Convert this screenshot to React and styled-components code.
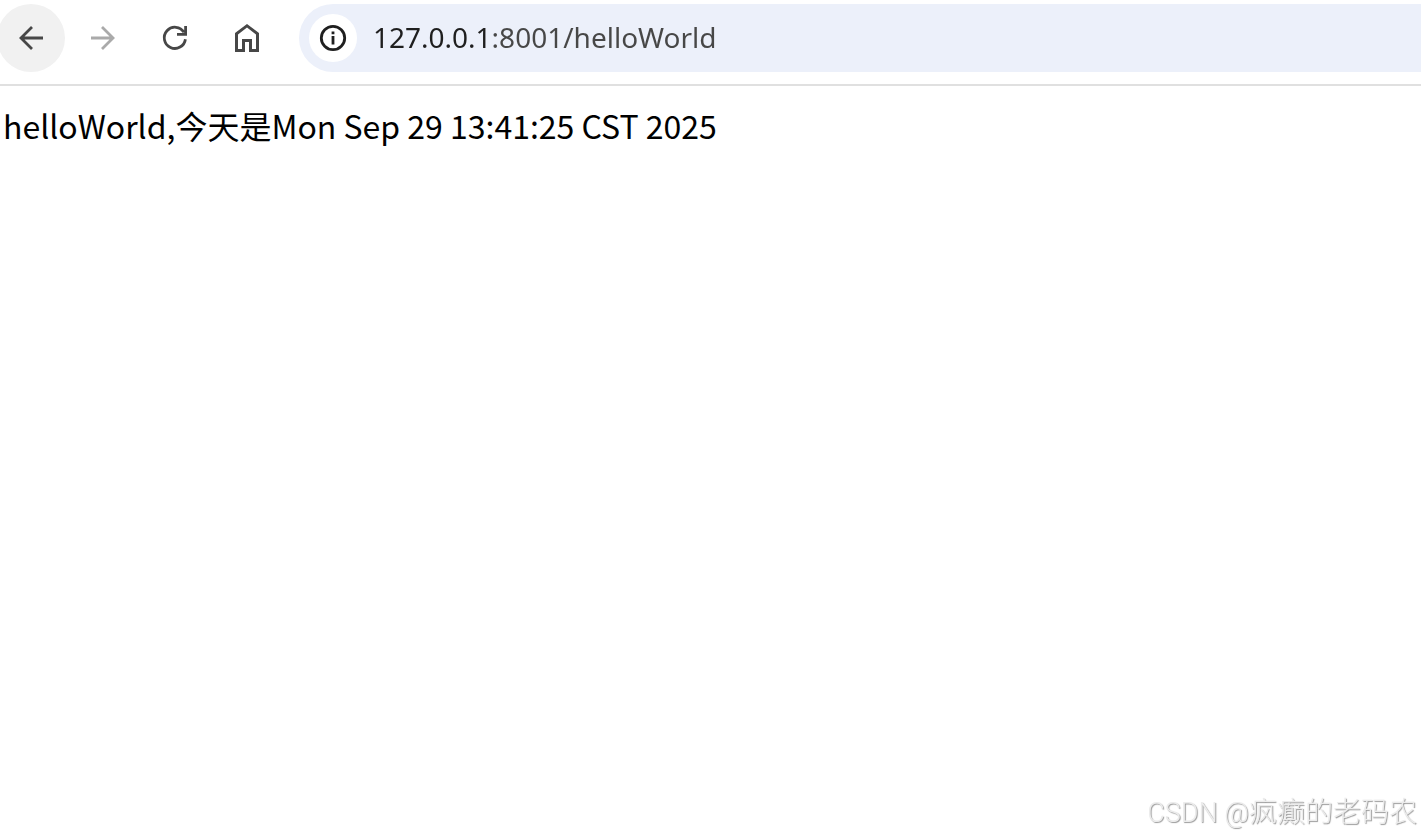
import React, { useState } from "react";
import styled, { createGlobalStyle } from "styled-components";

const App = () => {
  const [url, setUrl] = useState("127.0.0.1:8001/helloWorld");

  return (
    <>
      <GlobalStyle />
      <Toolbar>
        <NavButton type="button" aria-label="Back" $active>
          <Icon viewBox="0 0 32 32">
            <path d="M28 16H6M17 5L6 16L17 27" />
          </Icon>
        </NavButton>
        <NavButton type="button" aria-label="Forward" $muted>
          <Icon viewBox="0 0 32 32">
            <path d="M4 16H26M15 5L26 16L15 27" />
          </Icon>
        </NavButton>
        <NavButton type="button" aria-label="Reload">
          <Icon viewBox="0 0 32 32">
            <path d="M26.4 17.2A10.6 10.6 0 1 1 25 10.4M18 12.4H26.6V4" />
          </Icon>
        </NavButton>
        <NavButton type="button" aria-label="Home">
          <Icon viewBox="0 0 32 32">
            <path
              d="M16 2L28 11V30H18V20H14V30H4V11ZM16 5.6L7 12.4V27H11V17H21V27H25V12.4Z"
              fill="currentColor"
              fillRule="evenodd"
              stroke="none"
            />
          </Icon>
        </NavButton>
        <AddressBar>
          <InfoButton type="button" aria-label="Site information">
            <Icon viewBox="0 0 32 32">
              <circle cx="16" cy="16" r="11.7" />
              <path d="M16 9.4V12.2M16 14V22.6" />
            </Icon>
          </InfoButton>
          <AddressInput
            type="text"
            aria-label="Address"
            spellCheck="false"
            value={url}
            onChange={(e) => setUrl(e.target.value)}
          />
        </AddressBar>
      </Toolbar>

      <Content>helloWorld,今天是Mon Sep 29 13:41:25 CST 2025</Content>

      <Watermark>
        <Site>CSDN @</Site>疯癫的老码农
      </Watermark>
    </>
  );
};

export default App;

const GlobalStyle = createGlobalStyle`
body{
margin:0;
background:#fff;
overflow-x:hidden;
}
*{
box-sizing:border-box;
}
`
const Toolbar = styled.header`
display:flex;
align-items:center;
gap:4px;
margin-left:-3px;
padding:4px 0 12px;
border-bottom:2px solid #e0e0e0;
`
const NavButton = styled.button`
display:flex;
flex:none;
align-items:center;
justify-content:center;
width:68px;
height:68px;
padding:0;
border:0;
border-radius:50%;
background:${(props) => (props.$active ? "#f1f1f1" : "transparent")};
color:${(props) => (props.$muted ? "#aaa" : "#474747")};
`
const Icon = styled.svg`
width:32px;
height:32px;
fill:none;
stroke:currentColor;
stroke-width:2.8;
`
const AddressBar = styled.div`
display:flex;
flex:1;
align-items:center;
gap:16px;
height:68px;
margin-left:14px;
padding-left:10px;
border-radius:34px 0 0 34px;
background:#ecf0fa;
`
const InfoButton = styled.button`
display:flex;
flex:none;
align-items:center;
justify-content:center;
width:48px;
height:48px;
padding:0;
border:0;
border-radius:50%;
background:#fff;
color:#1f1f1f;
`
/* host part is darker than the port and path */
const AddressInput = styled.input`
flex:1;
min-width:0;
height:48px;
padding:0 0 2px;
border:0;
outline:0;
font:28px/46px "Noto Sans", sans-serif;
color:#474747;
background:linear-gradient(to right, #1f1f1f 118px, #474747 118px);
background-clip:text;
-webkit-text-fill-color:transparent;
`
const Content = styled.main`
padding:15px 3px;
font:32px/48px "Noto Sans CJK SC", sans-serif;
color:#000;
`
const Watermark = styled.div`
position:fixed;
right:4px;
bottom:4px;
font:300 28px/42px "Noto Sans CJK SC", sans-serif;
color:#ececec;
text-shadow:1px 1px 1px #999;
`
const Site = styled.span`
font-family:Roboto, sans-serif;
font-size:27px;
`
